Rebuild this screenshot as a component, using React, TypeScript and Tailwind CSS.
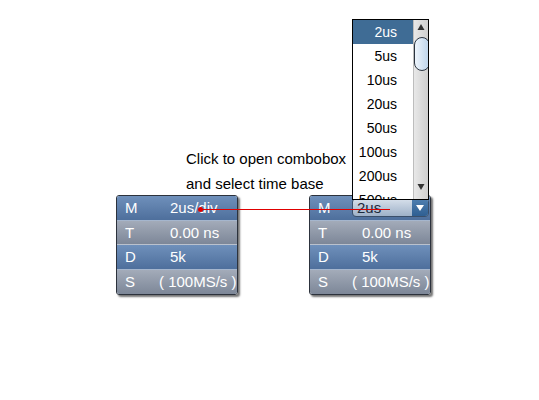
import React from "react";

const blue = "bg-gradient-to-b from-[#6f90bb] to-[#4e6f9c]";
const gray = "bg-gradient-to-b from-[#a3abb9] to-[#7d8798]";

function Row({ letter, children, color, pos }: { letter: string; children: React.ReactNode; color: string; pos?: "first" | "last" }) {
  const round = pos === "first" ? "rounded-t-[2px]" : pos === "last" ? "rounded-b-[2px]" : "";
  return (
    <div className={`flex items-center h-[24.5px] ${color} ${round} ${pos === "last" ? "" : "border-b border-[#c9d0da]/60"}`}>
      <span className="w-[42px] pl-[8px] text-white text-[15px] leading-none">{letter}</span>
      {children}
    </div>
  );
}

function Panel({ combo }: { combo?: boolean }) {
  return (
    <div className="relative w-[122px] rounded-[3px] border border-[#2c323c] shadow-[2px_2px_2px_rgba(0,0,0,0.55)]">
      <Row letter="M" color={blue} pos="first">
        {combo ? (
          <Combo />
        ) : (
          <span className="pl-[11px] text-white text-[15px] leading-none">2us/div</span>
        )}
      </Row>
      <Row letter="T" color={gray}>
        <span className={`${combo ? "pl-[10px]" : "pl-[11px]"} text-white text-[15px] leading-none`}>0.00 ns</span>
      </Row>
      <Row letter="D" color={blue}>
        <span className={`${combo ? "pl-[10px]" : "pl-[11px]"} text-white text-[15px] leading-none`}>5k</span>
      </Row>
      <Row letter="S" color={gray} pos="last">
        <span className="text-white text-[15px] leading-none whitespace-pre">( 100MS/s )</span>
      </Row>
    </div>
  );
}

const items = ["2us", "5us", "10us", "20us", "50us", "100us", "200us", "500us"];

function Dropdown() {
  return (
    <div className="absolute z-10 left-[-1px] bottom-[16px] w-[77px] h-[181px] bg-white border border-black overflow-hidden flex">
      <div className="flex-1 flex flex-col">
        {items.map((it, i) => (
          <div
            key={it}
            className={`h-[24px] shrink-0 flex items-center justify-end pr-[16px] text-[14px] leading-none ${
              i === 0 ? "bg-[#3f6c95] text-white" : "text-black"
            }`}
          >
            {it}
          </div>
        ))}
      </div>
      <div className="w-[15px] relative bg-gradient-to-r from-[#e8e8e8] to-[#cfcfcf] border-l border-[#bdbdbd]">
        <svg className="absolute left-[3px] top-[3px]" width="8" height="8" viewBox="0 0 8 8">
          <path d="M4 1 L7.5 7 L0.5 7 Z" fill="#333" />
        </svg>
        <div className="absolute left-[0px] top-[17px] w-[16px] h-[34px] rounded-[9px] border border-[#2b3440] bg-gradient-to-r from-[#eef5fc] to-[#bcd3ea]" />
        <svg className="absolute left-[3px] bottom-[8px]" width="8" height="8" viewBox="0 0 8 8">
          <path d="M0.5 1 L7.5 1 L4 7 Z" fill="#333" />
        </svg>
      </div>
    </div>
  );
}

function Combo() {
  return (
    <div className="relative w-[77px] h-[19px] rounded-[4px] border border-[#3a4f6a] bg-gradient-to-b from-[#d7e0eb] to-[#9eb1c8] flex items-center">
      <span className="pl-[4px] flex-1 text-[#1d2a3c] text-[15px] leading-none">2us</span>
      <div className="w-[16px] h-[17px] rounded-r-[3px] bg-gradient-to-b from-[#4f7fb0] to-[#2f5f92] flex items-center justify-center">
        <svg width="8" height="6" viewBox="0 0 8 6">
          <path d="M0 0 L8 0 L4 6 Z" fill="white" />
        </svg>
      </div>
      <Dropdown />
    </div>
  );
}

export default function App() {
  return (
    <div className="relative w-[539px] h-[400px] bg-white overflow-hidden" style={{ fontFamily: "'Liberation Sans', Arial, sans-serif" }}>
      <div className="pt-[146px]">
        <div className="ml-[186px] h-[49px] text-[15px] leading-[25px] text-black">
          <div>Click to open combobox</div>
          <div>and select time base</div>
        </div>
        <div className="flex ml-[116px] gap-[71px]">
          <Panel />
          <Panel combo />
        </div>
      </div>
      <div className="absolute z-20 left-[200px] top-[209px] w-[190px] h-px bg-[#e00000]" />
      <div className="absolute z-20 left-[198px] top-[207px] w-[5px] h-[5px] rounded-full bg-[#e00000]" />
    </div>
  );
}
